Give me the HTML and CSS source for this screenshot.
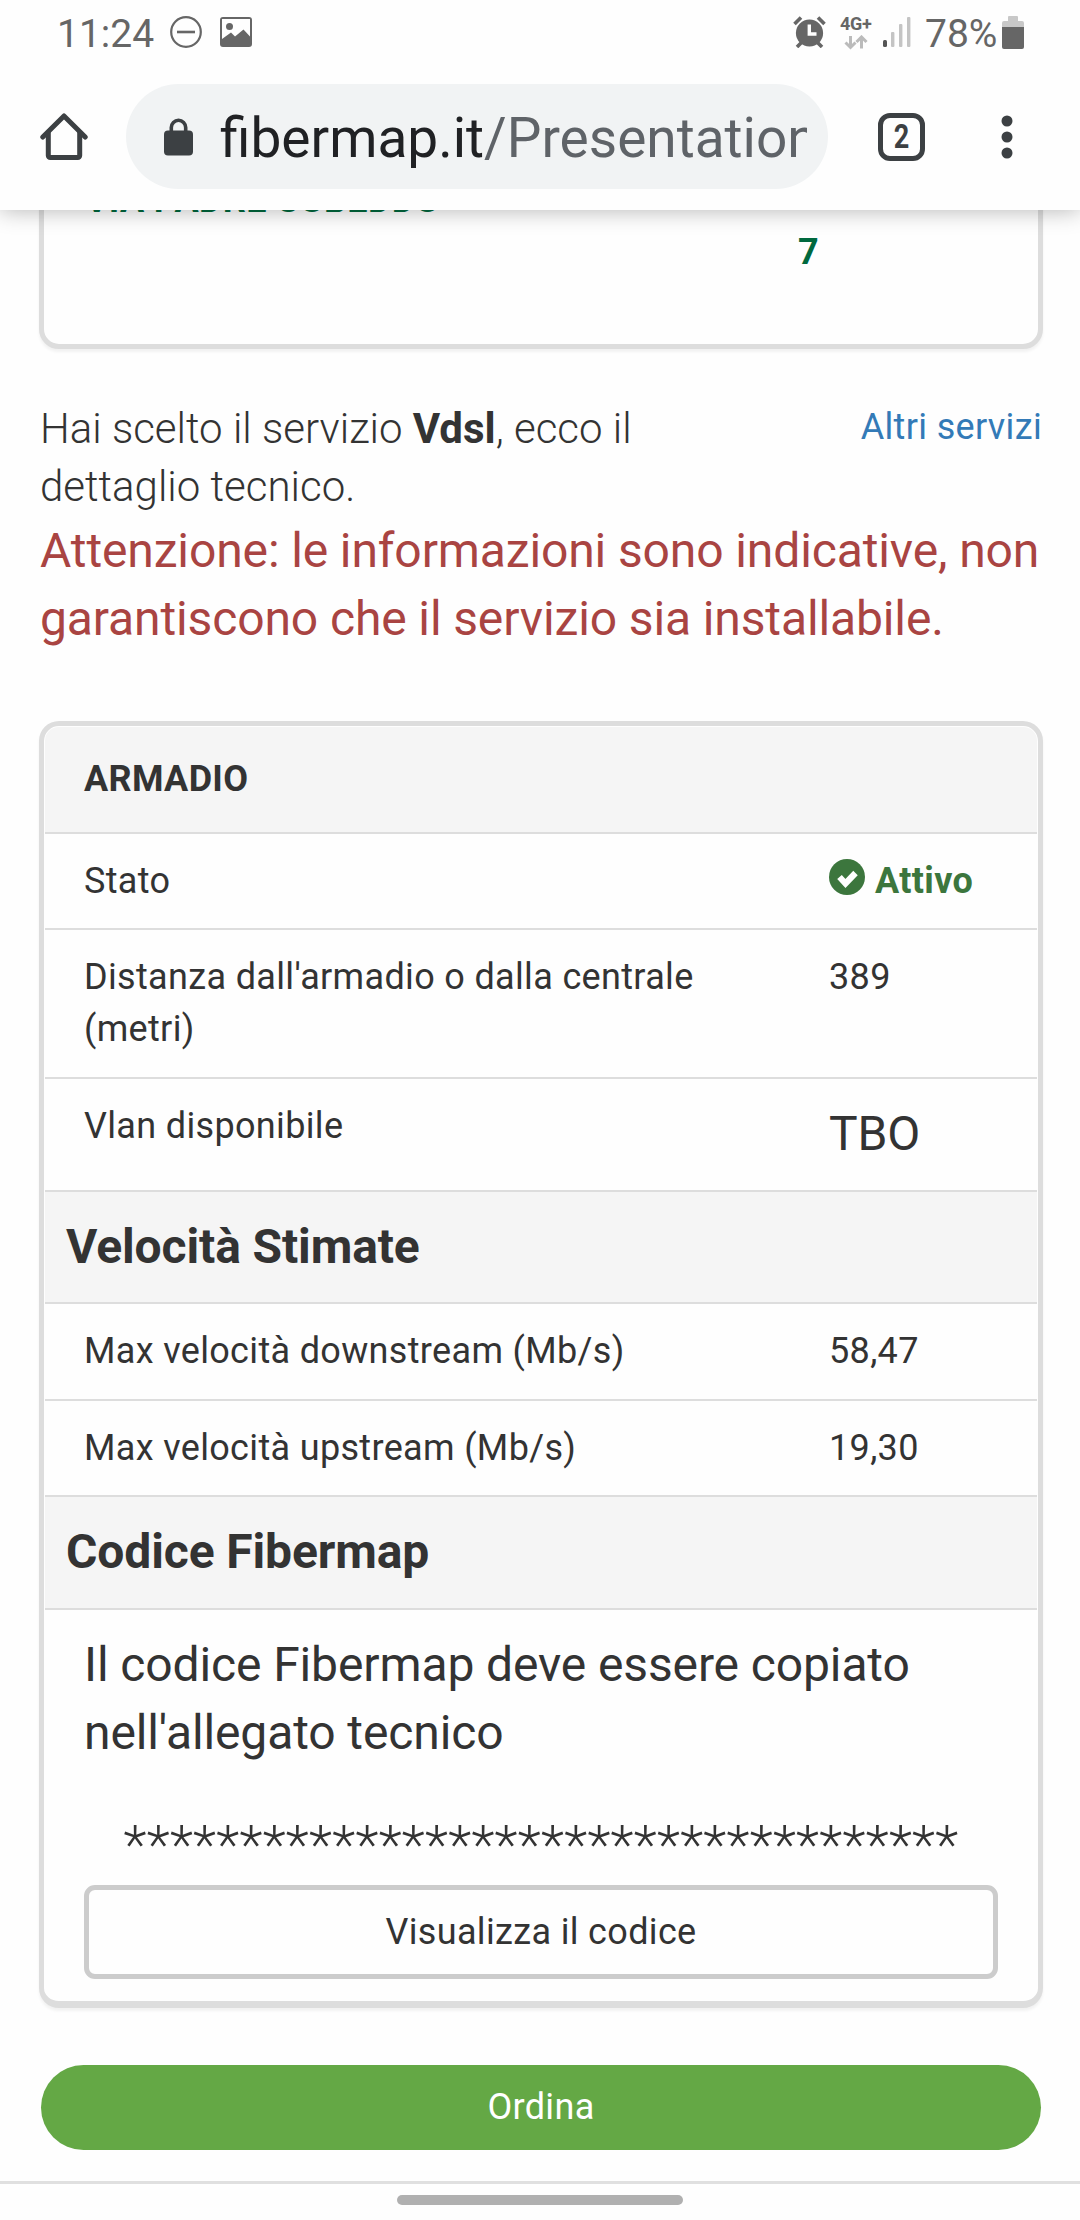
FILE: index.html
```html
<!DOCTYPE html>
<html lang="it">
<head>
  <meta charset="UTF-8" />
  <title>Fibermap</title>
  <link rel="stylesheet" href="styles.css">
</head>
<body>

<header class="top">
  <div class="status-bar">
    <span class="clock">11:24</span>
    <svg class="ic-dnd" width="32" height="32" viewBox="0 0 32 32" fill="none" stroke="#666">
      <circle cx="16" cy="16" r="14.8" stroke-width="2.2"/>
      <path d="M7 16h18" stroke-width="2.6"/>
    </svg>
    <svg class="ic-pic" width="32" height="30" viewBox="0 0 32 30">
      <path fill="#666" fill-rule="evenodd" d="M3 0h26a3 3 0 0 1 3 3v24a3 3 0 0 1-3 3H3a3 3 0 0 1-3-3V3a3 3 0 0 1 3-3zM2 2v20l9-6.500 4 4 8.500-7 6.500 7V2z"/>
      <circle cx="9.500" cy="9.500" r="3.500" fill="#666"/>
    </svg>
    <svg class="ic-alarm" width="33" height="32" viewBox="0 0 33 32">
      <g stroke="#666" stroke-width="3.600"><path d="M1.500 8L8 1.500M31.500 8L25 1.500"/><path d="M4 31l5-5M29 31l-5-5"/></g>
      <circle cx="16.500" cy="17" r="13.600" fill="#666"/>
      <path d="M16.300 8.500v9.500h7.200" fill="none" stroke="#fff" stroke-width="3.400"/>
    </svg>
    <div class="net">
      <span>4G+</span>
      <svg width="24" height="15" viewBox="0 0 24 15" fill="none" stroke="#bbb" stroke-width="3">
        <path d="M6.500 1v11M1.500 7.500l5 5 5-5M17.500 13.500V3M12.500 7l5-5 5 5"/>
      </svg>
    </div>
    <svg class="ic-signal" width="28" height="30" viewBox="0 0 28 30" fill="#c4c4c4">
      <rect x="0" y="23" width="4" height="7" rx="1.500" fill="#555"/>
      <rect x="8" y="15" width="3.400" height="15" rx="1"/>
      <rect x="16" y="7" width="3.400" height="23" rx="1"/>
      <rect x="24" y="0" width="3.400" height="30" rx="1"/>
    </svg>
    <span class="percent">78%</span>
    <svg class="ic-batt" width="22" height="34" viewBox="0 0 22 34">
      <path fill="#c8c8c8" d="M7 0h8a1 1 0 0 1 1 1v4h4a2 2 0 0 1 2 2v5H0V7a2 2 0 0 1 2-2h4V1a1 1 0 0 1 1-1z"/>
      <path fill="#666" d="M0 11h22v20a2 2 0 0 1-2 2H2a2 2 0 0 1-2-2z"/>
    </svg>
  </div>

  <div class="toolbar">
    <svg class="ic-home" width="48" height="48" viewBox="0 0 48 48" fill="none" stroke="#3c4043" stroke-width="5" stroke-linecap="round" stroke-linejoin="round">
      <path d="M2.800 24L24 3l21.200 21"/>
      <path d="M8.300 20v22.500a2 2 0 0 0 2 2h27.400a2 2 0 0 0 2-2V20"/>
    </svg>
    <div class="url-bar">
      <svg width="29" height="38" viewBox="0 0 29 38">
        <rect x="0" y="12.500" width="29" height="25" rx="4" fill="#3c4043"/>
        <path d="M7.300 14V9.500a7.200 7.200 0 0 1 14.400 0V14" fill="none" stroke="#3c4043" stroke-width="3.600"/>
      </svg>
      <div class="url">fibermap.it<span>/Presentation</span></div>
    </div>
    <div class="tabs"><span>2</span></div>
    <svg class="ic-menu" width="12" height="44" viewBox="0 0 12 44" fill="#3c4043">
      <circle cx="6" cy="6" r="5.500"/><circle cx="6" cy="22" r="5.500"/><circle cx="6" cy="38" r="5.500"/>
    </svg>
  </div>
</header>

<main class="page">
  <div class="panel address">
    <div class="street">VIA PADRE CUBEDDU</div>
    <div class="number"><br>7</div>
  </div>

  <div class="intro">
    <p>Hai scelto il servizio <b>Vdsl</b>, ecco il dettaglio tecnico.</p>
    <a>Altri servizi</a>
  </div>
  <p class="warning">Attenzione: le informazioni sono indicative, non garantiscono che il servizio sia installabile.</p>

  <div class="panel detail">
    <div class="panel-head">ARMADIO</div>
    <div class="row">
      <div>Stato</div>
      <div class="active">
        <svg width="36" height="36" viewBox="0 0 36 36">
          <circle cx="18" cy="18" r="18" fill="#3c763d"/>
          <path d="M10.500 18l6 6.500L26.500 14" fill="none" stroke="#fff" stroke-width="6.200"/>
        </svg>
        Attivo
      </div>
    </div>
    <div class="row tall">
      <div>Distanza dall'armadio o dalla centrale (metri)</div>
      <div>389</div>
    </div>
    <div class="row vlan">
      <div>Vlan disponibile</div>
      <div class="big">TBO</div>
    </div>
    <div class="row section speed">Velocità Stimate</div>
    <div class="row down">
      <div>Max velocità downstream (Mb/s)</div>
      <div>58,47</div>
    </div>
    <div class="row">
      <div>Max velocità upstream (Mb/s)</div>
      <div>19,30</div>
    </div>
    <div class="row section">Codice Fibermap</div>
    <div class="code">
      <p>Il codice Fibermap deve essere copiato nell'allegato tecnico</p>
      <div class="stars">************************************</div>
      <button class="show">Visualizza il codice</button>
    </div>
  </div>

  <button class="order">Ordina</button>
</main>

<footer class="nav"><div class="handle"></div></footer>

</body>
</html>
```
FILE: styles.css
```css
* {
  box-sizing: border-box;
}
body {
  margin: 0;
  width: 1080px;
  height: 2220px;
  overflow: hidden;
  display: flex;
  flex-direction: column;
  background: #fefefe;
  color: #333;
  font-family: Roboto, sans-serif;
  font-size: 36px;
  line-height: 52px;
  letter-spacing: 0.34px;
}
p {
  margin: 0;
}
b {
  font-weight: 700;
}
svg {
  display: block;
  flex: none;
}

/* browser chrome */
.top {
  position: relative;
  z-index: 1;
  height: 210px;
  flex: none;
  background: #fefefe;
  box-shadow: 0 0 22px rgba(0, 0, 0, 0.3);
  letter-spacing: 0;
}
.status-bar {
  display: flex;
  height: 84px;
  padding: 16px 56px 0 57px;
  color: #666;
  font-size: 39px;
  line-height: 36px;
}
.clock {
  width: 113px;
}
.ic-pic {
  margin: 1px 0 0 18px;
}
.ic-alarm {
  margin: 0 0 0 auto;
}
.net {
  width: 33px;
  margin: 1px 10px 0 14px;
}
.net span {
  display: block;
  height: 18px;
  font-size: 18px;
  line-height: 14px;
  font-weight: 700;
  letter-spacing: -0.3px;
}
.net svg {
  margin-left: 4px;
}
.ic-signal {
  margin: 1px 0 0;
}
.percent {
  margin-left: 14px;
  width: 77px;
}
.toolbar {
  display: flex;
  align-items: center;
  height: 105px;
  padding: 0 67px 0 40px;
}
.url-bar {
  display: flex;
  align-items: center;
  width: 702px;
  height: 105px;
  margin-left: 38px;
  padding: 0 21px 0 38px;
  border-radius: 53px;
  background: #f1f3f4;
}
.url {
  flex: 1;
  margin-left: 27px;
  padding-top: 2px;
  overflow: hidden;
  white-space: nowrap;
  color: #202124;
  font-size: 55px;
  line-height: 70px;
}
.url span {
  color: #5f6368;
}
.tabs {
  width: 48px;
  height: 48px;
  margin: 0 76px 0 50px;
  border: 5px solid #3c4043;
  border-radius: 12px;
  color: #3c4043;
  font-size: 33px;
  line-height: 38px;
  font-weight: 700;
  text-align: center;
}
.tabs span {
  display: block;
  transform: scaleX(0.82);
}

/* page content */
.page {
  flex: 1;
  padding: 0 37px 0 39px;
  overflow: hidden;
}
.panel {
  border: 5px solid #ddd;
  border-radius: 20px;
  background: #fefefe;
  box-shadow: 0 3px 3px rgba(0, 0, 0, 0.05);
}
.address {
  display: flex;
  height: 199px;
  margin-top: -60px;
  padding: 19px 41px;
  color: #00693e;
  font-weight: 700;
}
.street {
  width: 713px;
}
.intro {
  display: flex;
  justify-content: space-between;
  height: 116px;
  margin: 50px 1px 0;
}
.intro p {
  width: 640px;
  padding-top: 1px;
  font-size: 42px;
  line-height: 58px;
  font-weight: 300;
  letter-spacing: 0;
}
.intro a {
  padding-top: 2px;
  color: #337ab7;
}
.warning {
  margin: 2px 0 0 1px;
  color: #a94442;
  font-size: 48px;
  line-height: 68px;
  letter-spacing: -0.12px;
}
.detail {
  margin-top: 68px;
  padding: 1px 1px 0;
  border-bottom-width: 7px;
}
.panel-head {
  height: 107px;
  padding: 26px 39px;
  border-bottom: 2px solid #ddd;
  border-radius: 14px 14px 0 0;
  background: #f5f5f5;
  font-weight: 700;
}
.row {
  display: grid;
  grid-template-columns: 745px 1fr;
  height: 96px;
  padding: 21px 39px 0;
  border-bottom: 2px solid #ddd;
}
.row > div:first-child {
  padding-right: 90px;
}
.tall {
  height: 149px;
}
.vlan {
  height: 113px;
}
.down {
  height: 97px;
}
.active {
  display: flex;
  gap: 10px;
  color: #3c763d;
  font-weight: 700;
}
.active svg {
  margin-top: 4px;
}
.big {
  font-size: 48px;
  line-height: 68px;
  letter-spacing: -0.12px;
}
.section {
  display: block;
  height: 113px;
  padding-left: 21px;
  background: #f5f5f5;
  font-size: 48px;
  line-height: 68px;
  font-weight: 700;
  letter-spacing: -0.12px;
}
.speed {
  height: 112px;
}
.code {
  height: 391px;
  padding: 21px 39px 0;
}
.code p {
  font-size: 48px;
  line-height: 68px;
  letter-spacing: -0.12px;
}
.stars {
  height: 118px;
  padding-top: 46px;
  font-size: 54px;
  line-height: 64px;
  font-weight: 300;
  letter-spacing: 0.28px;
  text-align: center;
}
button {
  display: block;
  font: inherit;
  letter-spacing: inherit;
  padding: 0;
}
.show {
  width: 914px;
  height: 94px;
  border: 5px solid #ccc;
  border-radius: 11px;
  background: #fefefe;
  color: #333;
}
.order {
  width: 1000px;
  height: 85px;
  margin: 57px 0 0 2px;
  padding-bottom: 2px;
  border: 0;
  border-radius: 43px;
  background: #64a845;
  color: #fff;
}

/* gesture bar */
.nav {
  flex: none;
  height: 39px;
  padding-top: 11px;
  border-top: 3px solid #e0e0e0;
}
.handle {
  width: 286px;
  height: 10px;
  margin: 0 auto;
  border-radius: 5px;
  background: #b0b0b0;
}
```
